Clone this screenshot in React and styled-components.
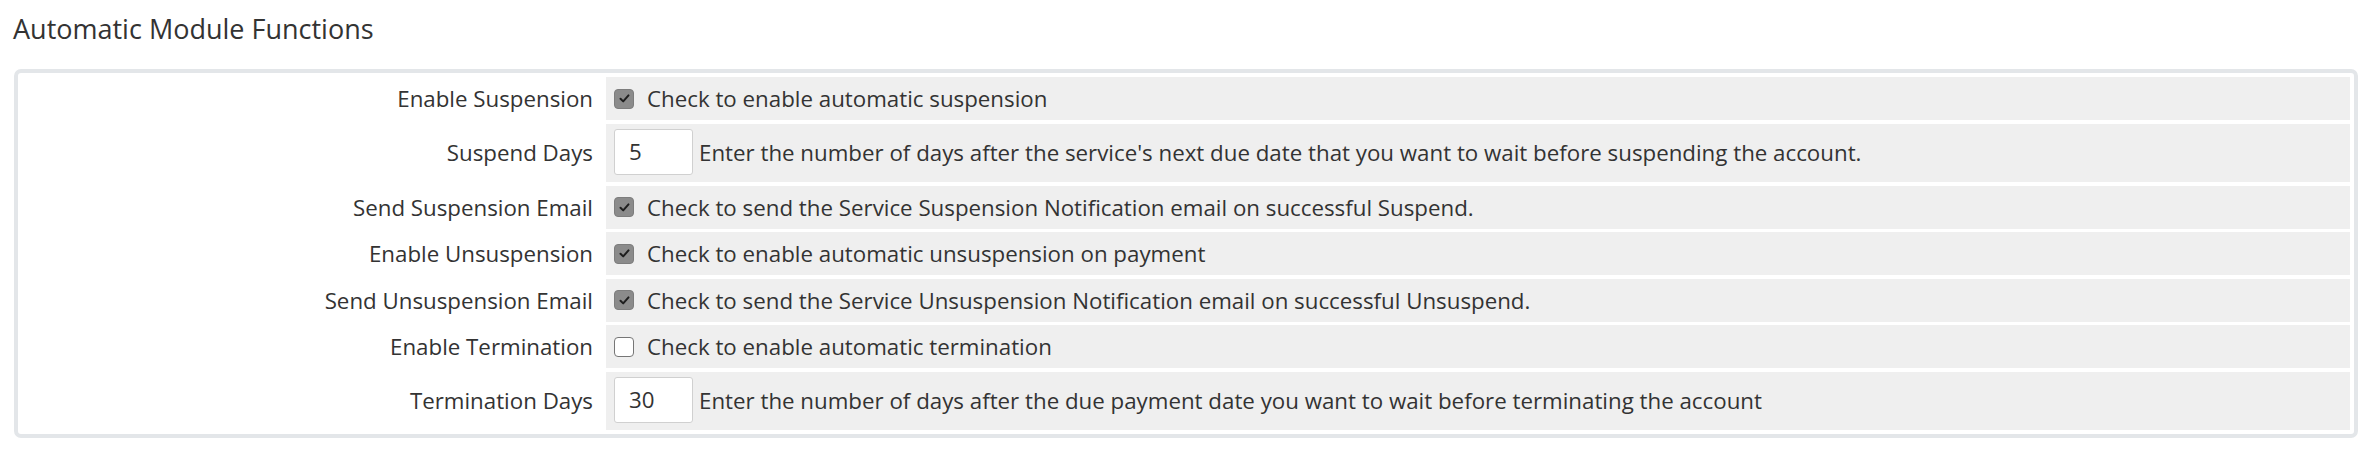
import React from 'react';
import styled, { createGlobalStyle } from 'styled-components';

const GlobalStyle = createGlobalStyle`
  body {
    margin: 0;
    background: #fff;
    font-family: "Open Sans", "Liberation Sans", sans-serif;
    color: #333;
  }
`;

const rows = [
  { label: 'Enable Suspension', type: 'check', checked: true, text: 'Check to enable automatic suspension' },
  { label: 'Suspend Days', type: 'input', value: '5', text: "Enter the number of days after the service's next due date that you want to wait before suspending the account." },
  { label: 'Send Suspension Email', type: 'check', checked: true, text: 'Check to send the Service Suspension Notification email on successful Suspend.' },
  { label: 'Enable Unsuspension', type: 'check', checked: true, text: 'Check to enable automatic unsuspension on payment' },
  { label: 'Send Unsuspension Email', type: 'check', checked: true, text: 'Check to send the Service Unsuspension Notification email on successful Unsuspend.' },
  { label: 'Enable Termination', type: 'check', checked: false, text: 'Check to enable automatic termination' },
  { label: 'Termination Days', type: 'input', value: '30', text: 'Enter the number of days after the due payment date you want to wait before terminating the account' },
];

function App() {
  return (
    <Page>
      <GlobalStyle />
      <Title>Automatic Module Functions</Title>
      <Panel>
        {rows.map((r) => (
          <Row key={r.label} tall={r.type === 'input'}>
            <Label>{r.label}</Label>
            <Field>
              {r.type === 'check' ? (
                <Box checked={r.checked}>
                  {r.checked && (
                    <svg width="13" height="13" viewBox="0 0 13 13">
                      <path d="M2.5 6.8 L5.2 9.4 L10.5 3.4" fill="none" stroke="#1e1e1e" strokeWidth="2" strokeLinecap="round" strokeLinejoin="round" />
                    </svg>
                  )}
                </Box>
              ) : (
                <DaysInput defaultValue={r.value} />
              )}
              <Desc inputRow={r.type === 'input'}>{r.text}</Desc>
            </Field>
          </Row>
        ))}
      </Panel>
    </Page>
  );
}

const Page = styled.div`
  padding: 0 12px 0 14px;
`;

const Title = styled.h3`
  margin: 10px 0 22px -1px;
  font-size: 27px;
  line-height: 37px;
  font-weight: 400;
  color: #333;
`;

const Panel = styled.div`
  border: 4px solid #e3e6e9;
  border-radius: 7px;
  padding: 4px;
  display: flex;
  flex-direction: column;
  gap: 3.5px;
`;

const Row = styled.div`
  display: grid;
  grid-template-columns: 581px 1fr;
  column-gap: 3px;
  height: ${(p) => (p.tall ? '58.5px' : '43px')};
`;

const Label = styled.div`
  display: flex;
  align-items: center;
  justify-content: flex-end;
  padding-right: 10px;
  font-size: 22.3px;
  color: #333;
`;

const Field = styled.div`
  display: flex;
  align-items: center;
  background: #efefef;
  padding-left: 8px;
  font-size: 22.3px;
  color: #333;
`;

const Box = styled.span`
  box-sizing: border-box;
  width: 20px;
  height: 20px;
  border-radius: 4px;
  display: inline-flex;
  align-items: center;
  justify-content: center;
  background: ${(p) => (p.checked ? '#8b8b8b' : '#fff')};
  border: 1.5px solid ${(p) => (p.checked ? '#7d7d7d' : '#767676')};
  margin-right: 13px;
  flex-shrink: 0;
`;

const DaysInput = styled.input`
  box-sizing: border-box;
  width: 79px;
  height: 46px;
  border: 1px solid #d0d0d0;
  border-radius: 3px;
  background: #fff;
  padding: 0 0 0 14px;
  font-family: inherit;
  font-size: 22.3px;
  color: #333;
  outline: none;
  margin-top: -2px;
`;

const Desc = styled.span`
  margin-left: ${(p) => (p.inputRow ? '6px' : '0')};
  white-space: nowrap;
`;

export default App;
